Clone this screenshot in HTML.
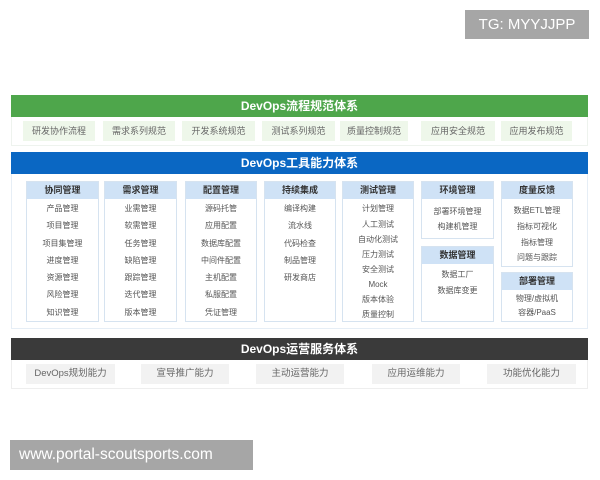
<!DOCTYPE html>
<html><head><meta charset="utf-8"><style>
*{margin:0;padding:0;box-sizing:border-box}
body{width:600px;height:480px;background:#fff;position:relative;overflow:hidden;font-family:"Liberation Sans","Noto Sans CJK SC",sans-serif;color:#555}
.a{position:absolute}
.bar{position:absolute;left:11px;width:577px;height:22px;color:#fff;font-weight:bold;font-size:12px;text-align:center;line-height:22px}
.pill{position:absolute;height:20px;line-height:20px;text-align:center;font-size:9px;color:#666}
.card{position:absolute;border:1px solid #d6e3f0;background:#fff}
.card .h{background:#cfe2f6;height:17px;line-height:17px;text-align:center;font-size:9px;font-weight:bold;color:#333}
.it{position:absolute;left:0;right:0;text-align:center;font-size:8px;color:#555;line-height:10px}
.tag{position:absolute;background:#a6a6a6;color:#fff}
</style></head><body>
<div class="tag" style="left:465px;top:10px;width:124px;height:29px;line-height:29px;font-size:15px;text-align:center">TG: MYYJJPP</div>

<div class="a" style="left:11px;top:95px;width:577px;height:51px;border:1px solid #eef3ee"></div>
<div class="bar" style="top:95px;background:#4ea64b">DevOps流程规范体系</div>
<div class="pill" style="left:23px;top:121px;width:72px;background:#eef7ea">研发协作流程</div>
<div class="pill" style="left:103px;top:121px;width:72px;background:#eef7ea">需求系列规范</div>
<div class="pill" style="left:182px;top:121px;width:73px;background:#eef7ea">开发系统规范</div>
<div class="pill" style="left:262px;top:121px;width:73px;background:#eef7ea">测试系列规范</div>
<div class="pill" style="left:340px;top:121px;width:68px;background:#eef7ea">质量控制规范</div>
<div class="pill" style="left:421px;top:121px;width:74px;background:#eef7ea">应用安全规范</div>
<div class="pill" style="left:501px;top:121px;width:71px;background:#eef7ea">应用发布规范</div>

<div class="a" style="left:11px;top:152px;width:577px;height:177px;border:1px solid #e6eef6"></div>
<div class="bar" style="top:152px;background:#0a67c3">DevOps工具能力体系</div>

<div class="card" style="left:26px;top:181px;width:73px;height:141px"><div class="h">协同管理</div>
<div class="it" style="top:22px">产品管理</div><div class="it" style="top:39px">项目管理</div><div class="it" style="top:57px">项目集管理</div><div class="it" style="top:74px">进度管理</div><div class="it" style="top:91px">资源管理</div><div class="it" style="top:108px">风险管理</div><div class="it" style="top:126px">知识管理</div></div>
<div class="card" style="left:104px;top:181px;width:73px;height:141px"><div class="h">需求管理</div>
<div class="it" style="top:22px">业需管理</div><div class="it" style="top:39px">软需管理</div><div class="it" style="top:57px">任务管理</div><div class="it" style="top:74px">缺陷管理</div><div class="it" style="top:91px">跟踪管理</div><div class="it" style="top:108px">迭代管理</div><div class="it" style="top:126px">版本管理</div></div>
<div class="card" style="left:185px;top:181px;width:72px;height:141px"><div class="h">配置管理</div>
<div class="it" style="top:22px">源码托管</div><div class="it" style="top:39px">应用配置</div><div class="it" style="top:57px">数据库配置</div><div class="it" style="top:74px">中间件配置</div><div class="it" style="top:91px">主机配置</div><div class="it" style="top:108px">私服配置</div><div class="it" style="top:126px">凭证管理</div></div>
<div class="card" style="left:264px;top:181px;width:72px;height:141px"><div class="h">持续集成</div>
<div class="it" style="top:22px">编译构建</div><div class="it" style="top:39px">流水线</div><div class="it" style="top:57px">代码检查</div><div class="it" style="top:74px">制品管理</div><div class="it" style="top:91px">研发商店</div></div>
<div class="card" style="left:342px;top:181px;width:72px;height:141px"><div class="h">测试管理</div>
<div class="it" style="top:22px">计划管理</div><div class="it" style="top:38px">人工测试</div><div class="it" style="top:53px">自动化测试</div><div class="it" style="top:68px">压力测试</div><div class="it" style="top:83px">安全测试</div><div class="it" style="top:98px">Mock</div><div class="it" style="top:113px">版本体验</div><div class="it" style="top:128px">质量控制</div></div>
<div class="card" style="left:421px;top:181px;width:73px;height:58px"><div class="h">环境管理</div>
<div class="it" style="top:25px">部署环境管理</div><div class="it" style="top:40px">构建机管理</div></div>
<div class="card" style="left:421px;top:246px;width:73px;height:76px"><div class="h">数据管理</div>
<div class="it" style="top:23px">数据工厂</div><div class="it" style="top:39px">数据库变更</div></div>
<div class="card" style="left:501px;top:181px;width:72px;height:86px"><div class="h">度量反馈</div>
<div class="it" style="top:24px">数据ETL管理</div><div class="it" style="top:40px">指标可视化</div><div class="it" style="top:56px">指标管理</div><div class="it" style="top:71px">问题与跟踪</div></div>
<div class="card" style="left:501px;top:272px;width:72px;height:50px"><div class="h">部署管理</div>
<div class="it" style="top:21px">物理/虚拟机</div><div class="it" style="top:35px">容器/PaaS</div></div>

<div class="a" style="left:11px;top:338px;width:577px;height:51px;border:1px solid #eee"></div>
<div class="bar" style="top:338px;background:#3a3a3a">DevOps运营服务体系</div>
<div class="pill" style="left:26px;top:364px;width:89px;height:20px;background:#f2f2f2;font-size:9.5px">DevOps规划能力</div>
<div class="pill" style="left:141px;top:364px;width:88px;height:20px;background:#f2f2f2;font-size:9.5px">宣导推广能力</div>
<div class="pill" style="left:256px;top:364px;width:88px;height:20px;background:#f2f2f2;font-size:9.5px">主动运营能力</div>
<div class="pill" style="left:372px;top:364px;width:88px;height:20px;background:#f2f2f2;font-size:9.5px">应用运维能力</div>
<div class="pill" style="left:487px;top:364px;width:89px;height:20px;background:#f2f2f2;font-size:9.5px">功能优化能力</div>

<div class="tag" style="left:10px;top:440px;width:243px;height:30px;line-height:30px;font-size:15.5px;padding-left:9px">www.portal-scoutsports.com</div>
</body></html>
